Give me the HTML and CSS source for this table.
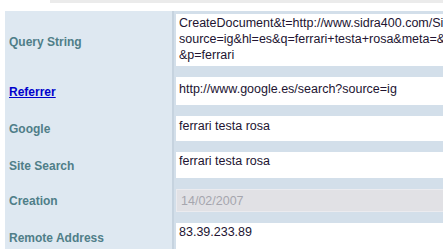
FILE: index.html
```html
<!DOCTYPE html>
<html>
<head>
<meta charset="utf-8">
<link rel="stylesheet" href="styles.css">
</head>
<body>
<div class="topband"></div>
<div class="form">
  <div class="label">Query String</div>
  <div class="value first"><div class="field multi">CreateDocument&amp;t=http://www.sidra400.com/Sidra<br>source=ig&amp;hl=es&amp;q=ferrari+testa+rosa&amp;meta=&amp;<br>&amp;p=ferrari</div></div>

  <div class="label"><a href="#" class="link">Referrer</a></div>
  <div class="value"><div class="field h28 padtop">http://www.google.es/search?source=ig</div></div>

  <div class="label">Google</div>
  <div class="value"><div class="field h25 padtop2">ferrari testa rosa</div></div>

  <div class="label">Site Search</div>
  <div class="value"><div class="field h26">ferrari testa rosa</div></div>

  <div class="label">Creation</div>
  <div class="value"><div class="field h23 disabled">14/02/2007</div></div>

  <div class="label">Remote Address</div>
  <div class="value"><div class="field h28">83.39.233.89</div></div>
</div>
</body>
</html>
```
FILE: styles.css
```css
html, body {
  margin: 0;
  padding: 0;
  background: #ffffff;
  overflow: hidden;
  width: 443px;
  height: 249px;
}
body {
  font-family: "Liberation Sans", Arial, sans-serif;
  font-size: 12px;
}
.topband {
  height: 3px;
  margin-left: 50px;
  background: #ebebeb;
}
.form {
  margin-top: 8px;
  margin-left: 5px;
  display: grid;
  grid-template-columns: 169px 400px;
}
.label {
  background: #dee8f1;
  border-right: 2px solid #c6d3df;
  padding-left: 4px;
  display: flex;
  align-items: center;
  font-weight: bold;
  color: #4f7e88;
}
.link {
  color: #0000cc;
  text-decoration: underline;
}
.value {
  background: #d3dfea;
  padding: 5px 0 6px 2px;
}
.value.first {
  padding-top: 3px;
}
.field {
  background: #ffffff;
  color: #221431;
  width: 320px;
  padding: 1px 3px 0;
  box-sizing: border-box;
  font-size: 12.5px;
  line-height: 16px;
  white-space: nowrap;
  overflow: hidden;
}
.multi { height: 52px; }
.h28 { height: 28px; }
.h25 { height: 25px; }
.h26 { height: 26px; }
.h23 { height: 23px; }
.padtop { padding-top: 4px; }
.padtop2 { padding-top: 2px; }
.disabled {
  background: #e1e1e5;
  color: #a6a6ae;
  border: 1px solid #ebebef;
  padding: 3px 4px 0;
}
```
